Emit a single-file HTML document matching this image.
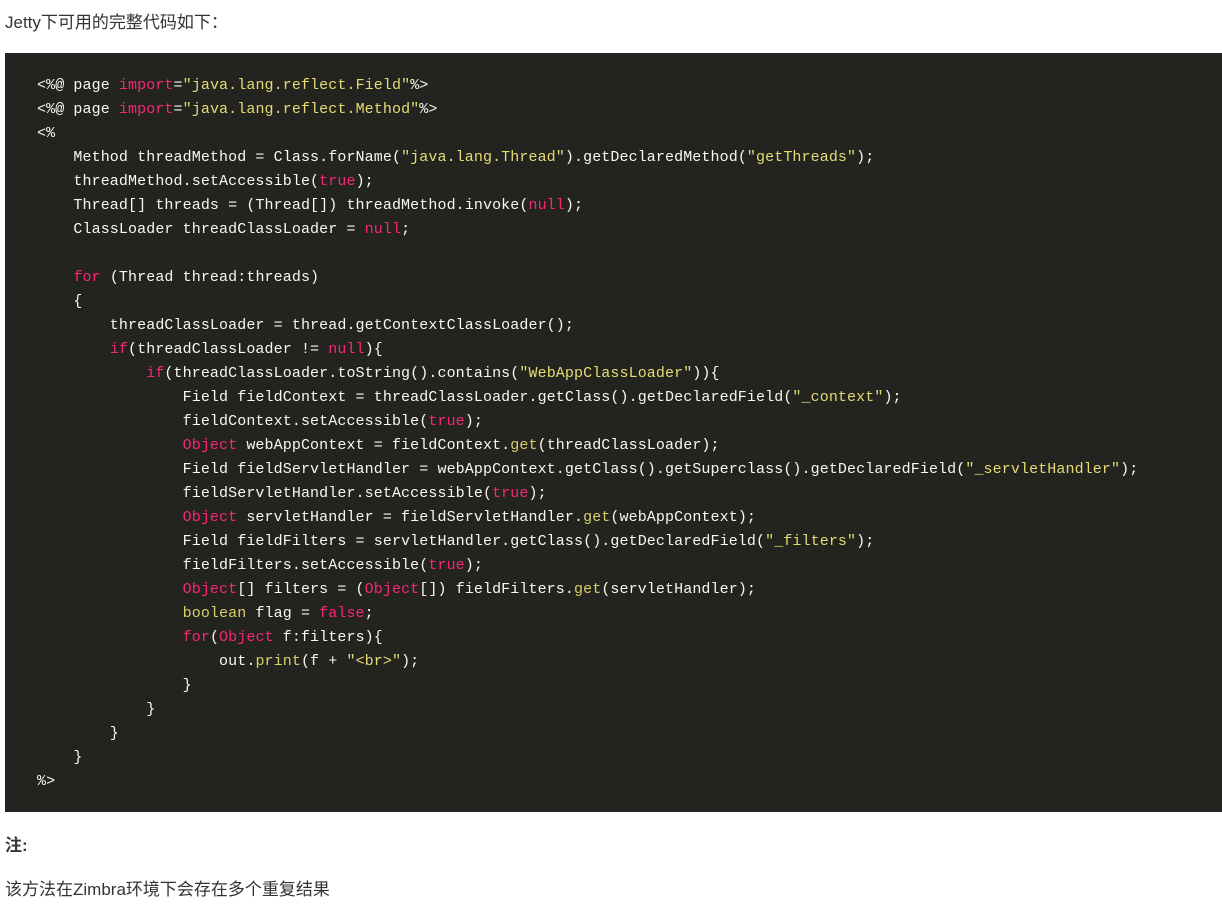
<!DOCTYPE html>
<html><head><meta charset="utf-8"><style>
body{margin:0;background:#fff;width:1222px;height:908px;overflow:hidden;font-family:"Liberation Sans","Noto Sans CJK SC",sans-serif;color:#333;font-size:17px}
.p{position:absolute;left:5px;white-space:nowrap}
pre{position:absolute;left:5px;top:53px;width:1217px;height:759px;margin:0;background:#23241f;box-sizing:border-box;padding:21px 0 0 32px;font-family:"Liberation Mono",monospace;font-size:15px;letter-spacing:0.1px;line-height:24px;color:#f8f8f2}
.k{color:#f92672}.s{color:#e6db74}.f{color:#d8cf6a}
</style></head><body>
<div class="p" style="top:8px">Jetty下可用的完整代码如下：</div>
<pre>&lt;%@ page <span class="k">import</span>=<span class="s">"java.lang.reflect.Field"</span>%&gt;
&lt;%@ page <span class="k">import</span>=<span class="s">"java.lang.reflect.Method"</span>%&gt;
&lt;%
    Method threadMethod = Class.forName(<span class="s">"java.lang.Thread"</span>).getDeclaredMethod(<span class="s">"getThreads"</span>);
    threadMethod.setAccessible(<span class="k">true</span>);
    Thread[] threads = (Thread[]) threadMethod.invoke(<span class="k">null</span>);
    ClassLoader threadClassLoader = <span class="k">null</span>;

    <span class="k">for</span> (Thread thread:threads)
    {
        threadClassLoader = thread.getContextClassLoader();
        <span class="k">if</span>(threadClassLoader != <span class="k">null</span>){
            <span class="k">if</span>(threadClassLoader.toString().contains(<span class="s">"WebAppClassLoader"</span>)){
                Field fieldContext = threadClassLoader.getClass().getDeclaredField(<span class="s">"_context"</span>);
                fieldContext.setAccessible(<span class="k">true</span>);
                <span class="k">Object</span> webAppContext = fieldContext.<span class="f">get</span>(threadClassLoader);
                Field fieldServletHandler = webAppContext.getClass().getSuperclass().getDeclaredField(<span class="s">"_servletHandler"</span>);
                fieldServletHandler.setAccessible(<span class="k">true</span>);
                <span class="k">Object</span> servletHandler = fieldServletHandler.<span class="f">get</span>(webAppContext);
                Field fieldFilters = servletHandler.getClass().getDeclaredField(<span class="s">"_filters"</span>);
                fieldFilters.setAccessible(<span class="k">true</span>);
                <span class="k">Object</span>[] filters = (<span class="k">Object</span>[]) fieldFilters.<span class="f">get</span>(servletHandler);
                <span class="f">boolean</span> flag = <span class="k">false</span>;
                <span class="k">for</span>(<span class="k">Object</span> f:filters){
                    out.<span class="f">print</span>(f + <span class="s">"&lt;br&gt;"</span>);
                }
            }
        }
    }
%&gt;</pre>
<div class="p" style="top:831px;font-weight:bold">注:</div>
<div class="p" style="top:875px">该方法在Zimbra环境下会存在多个重复结果</div>
</body></html>
